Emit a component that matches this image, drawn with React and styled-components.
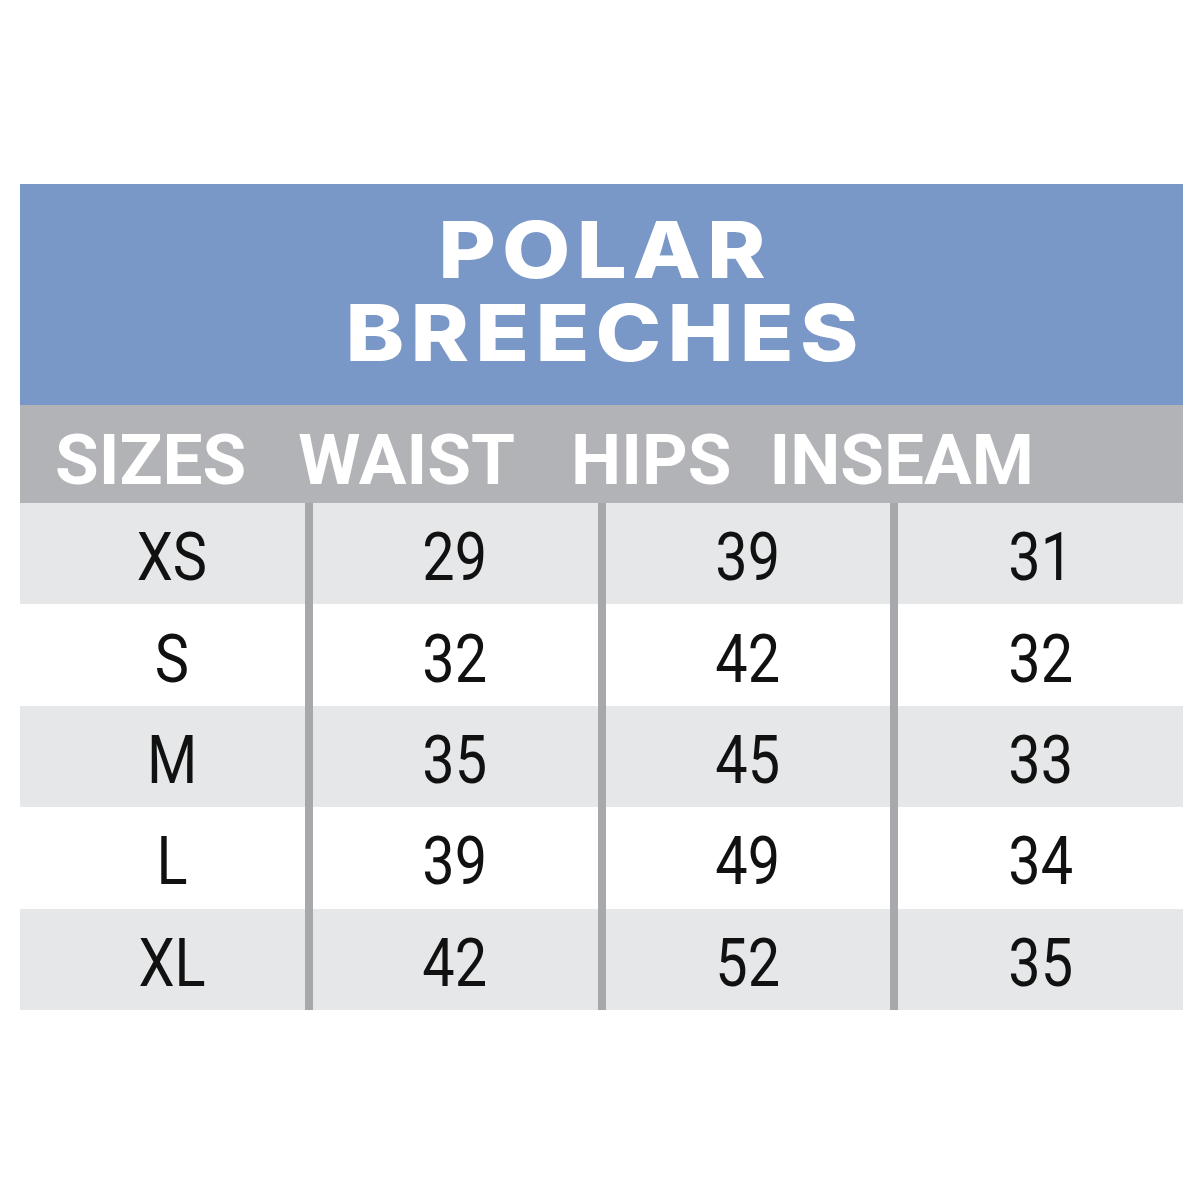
import styled, { createGlobalStyle } from "styled-components";

const Global = createGlobalStyle`
  body {
    margin: 0;
    background: #ffffff;
    font-family: Roboto, "Liberation Sans", sans-serif;
  }
`;

const Page = styled.div`
  width: 1200px;
  height: 1200px;
  padding-top: 184px;
  box-sizing: border-box;
`;

const Chart = styled.div`
  width: 1163px;
  margin-left: 20px;
`;

const Title = styled.div`
  background: #7a98c7;
  height: 221px;
  display: flex;
  align-items: center;
  justify-content: center;
  padding-bottom: 8px;
  box-sizing: border-box;
  h1 {
    margin: 0;
    padding-left: 6px;
    color: #ffffff;
    font-family: Inter, "Open Sans", sans-serif;
    font-weight: 800;
    font-size: 79px;
    line-height: 83px;
    letter-spacing: 5.5px;
    text-align: center;
    transform: scaleX(1.12);
  }
`;

const HeadRow = styled.div`
  background: #b1b3b6;
  height: 98px;
  display: flex;
  align-items: flex-end;
  padding: 0 0 8px 35px;
  box-sizing: border-box;
`;

const HeadLabel = styled.span`
  color: #ffffff;
  font-weight: 700;
  font-size: 71px;
  line-height: 1;
  margin-left: ${(p) => p.$gap || 0}px;
`;

const Body = styled.div`
  display: grid;
  grid-auto-rows: 101.4px;
`;

const Row = styled.div`
  display: grid;
  grid-template-columns: 1fr 1fr 1fr 1fr;
  column-gap: 8px;
  background: #a6a8ab;
`;

const Cell = styled.div`
  background: ${(p) => (p.$shade ? "#e6e7e8" : "#ffffff")};
  display: flex;
  align-items: center;
  justify-content: center;
  padding: 8px 0 0 ${(p) => p.$indent || 0}px;
  box-sizing: border-box;
`;

const Value = styled.span`
  display: inline-block;
  color: #111111;
  font-weight: 400;
  font-size: 67px;
  line-height: 1;
  transform: scaleX(0.86);
`;

const sizes = [
  ["XS", 29, 39, 31],
  ["S", 32, 42, 32],
  ["M", 35, 45, 33],
  ["L", 39, 49, 34],
  ["XL", 42, 52, 35],
];

const headers = [
  ["SIZES", 0],
  ["WAIST", 52],
  ["HIPS", 56],
  ["INSEAM", 38],
];

export default function App() {
  return (
    <Page>
      <Global />
      <Chart>
        <Title>
          <h1>
            POLAR
            <br />
            BREECHES
          </h1>
        </Title>
        <HeadRow>
          {headers.map(([label, gap]) => (
            <HeadLabel key={label} $gap={gap}>
              {label}
            </HeadLabel>
          ))}
        </HeadRow>
        <Body>
          {sizes.map((row, i) => (
            <Row key={row[0]}>
              {row.map((v, j) => (
                <Cell key={j} $shade={i % 2 === 0} $indent={j === 0 ? 20 : 0}>
                  <Value>{v}</Value>
                </Cell>
              ))}
            </Row>
          ))}
        </Body>
      </Chart>
    </Page>
  );
}
